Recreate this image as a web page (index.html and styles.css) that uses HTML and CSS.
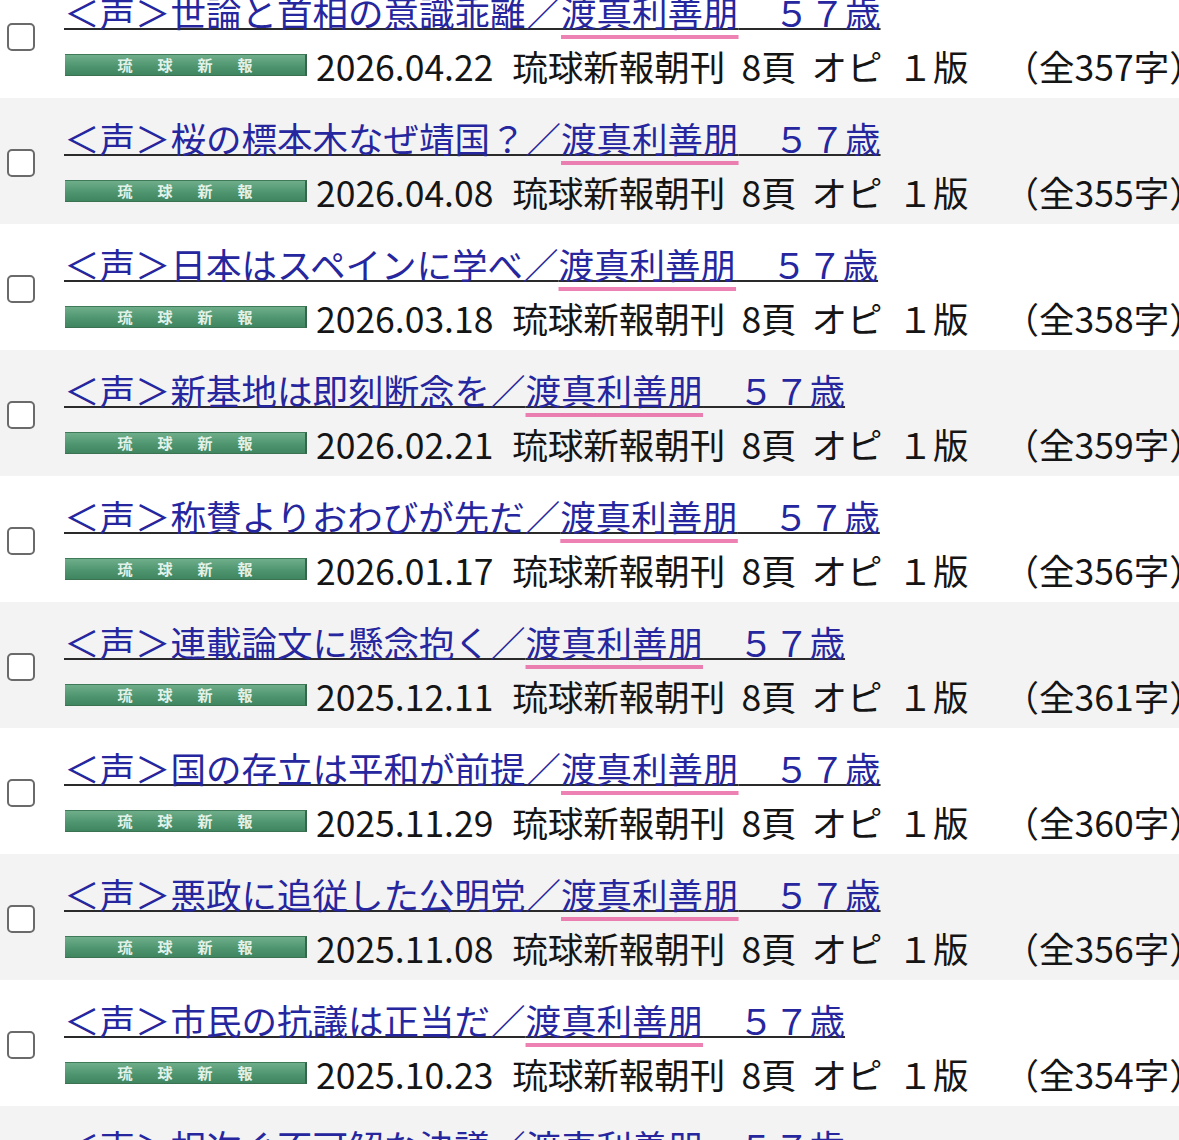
FILE: index.html
```html
<!DOCTYPE html>
<html lang="ja">
<head>
<meta charset="utf-8">
<title>記事一覧</title>
<link rel="stylesheet" href="styles.css">
</head>
<body>
<ul class="list">
  <li class="row">
    <span class="check"></span>
    <div class="body">
      <a class="title" href="#">＜声＞世論と首相の意識乖離／<span class="mark">渡真利善朋</span>　５７歳</a>
      <div class="meta"><span class="band">琉球新報</span><span class="date">2026.04.22</span><span class="paper">琉球新報朝刊</span><span class="page">8頁</span><span class="sec">オピ</span><span class="ed">１版</span><span class="count">（全357字）</span></div>
    </div>
  </li>
  <li class="row">
    <span class="check"></span>
    <div class="body">
      <a class="title" href="#">＜声＞桜の標本木なぜ靖国？／<span class="mark">渡真利善朋</span>　５７歳</a>
      <div class="meta"><span class="band">琉球新報</span><span class="date">2026.04.08</span><span class="paper">琉球新報朝刊</span><span class="page">8頁</span><span class="sec">オピ</span><span class="ed">１版</span><span class="count">（全355字）</span></div>
    </div>
  </li>
  <li class="row">
    <span class="check"></span>
    <div class="body">
      <a class="title" href="#">＜声＞日本はスペインに学べ／<span class="mark">渡真利善朋</span>　５７歳</a>
      <div class="meta"><span class="band">琉球新報</span><span class="date">2026.03.18</span><span class="paper">琉球新報朝刊</span><span class="page">8頁</span><span class="sec">オピ</span><span class="ed">１版</span><span class="count">（全358字）</span></div>
    </div>
  </li>
  <li class="row">
    <span class="check"></span>
    <div class="body">
      <a class="title" href="#">＜声＞新基地は即刻断念を／<span class="mark">渡真利善朋</span>　５７歳</a>
      <div class="meta"><span class="band">琉球新報</span><span class="date">2026.02.21</span><span class="paper">琉球新報朝刊</span><span class="page">8頁</span><span class="sec">オピ</span><span class="ed">１版</span><span class="count">（全359字）</span></div>
    </div>
  </li>
  <li class="row">
    <span class="check"></span>
    <div class="body">
      <a class="title" href="#">＜声＞称賛よりおわびが先だ／<span class="mark">渡真利善朋</span>　５７歳</a>
      <div class="meta"><span class="band">琉球新報</span><span class="date">2026.01.17</span><span class="paper">琉球新報朝刊</span><span class="page">8頁</span><span class="sec">オピ</span><span class="ed">１版</span><span class="count">（全356字）</span></div>
    </div>
  </li>
  <li class="row">
    <span class="check"></span>
    <div class="body">
      <a class="title" href="#">＜声＞連載論文に懸念抱く／<span class="mark">渡真利善朋</span>　５７歳</a>
      <div class="meta"><span class="band">琉球新報</span><span class="date">2025.12.11</span><span class="paper">琉球新報朝刊</span><span class="page">8頁</span><span class="sec">オピ</span><span class="ed">１版</span><span class="count">（全361字）</span></div>
    </div>
  </li>
  <li class="row">
    <span class="check"></span>
    <div class="body">
      <a class="title" href="#">＜声＞国の存立は平和が前提／<span class="mark">渡真利善朋</span>　５７歳</a>
      <div class="meta"><span class="band">琉球新報</span><span class="date">2025.11.29</span><span class="paper">琉球新報朝刊</span><span class="page">8頁</span><span class="sec">オピ</span><span class="ed">１版</span><span class="count">（全360字）</span></div>
    </div>
  </li>
  <li class="row">
    <span class="check"></span>
    <div class="body">
      <a class="title" href="#">＜声＞悪政に追従した公明党／<span class="mark">渡真利善朋</span>　５７歳</a>
      <div class="meta"><span class="band">琉球新報</span><span class="date">2025.11.08</span><span class="paper">琉球新報朝刊</span><span class="page">8頁</span><span class="sec">オピ</span><span class="ed">１版</span><span class="count">（全356字）</span></div>
    </div>
  </li>
  <li class="row">
    <span class="check"></span>
    <div class="body">
      <a class="title" href="#">＜声＞市民の抗議は正当だ／<span class="mark">渡真利善朋</span>　５７歳</a>
      <div class="meta"><span class="band">琉球新報</span><span class="date">2025.10.23</span><span class="paper">琉球新報朝刊</span><span class="page">8頁</span><span class="sec">オピ</span><span class="ed">１版</span><span class="count">（全354字）</span></div>
    </div>
  </li>
  <li class="row">
    <span class="check"></span>
    <div class="body">
      <a class="title" href="#">＜声＞相次ぐ不可解な決議／<span class="mark">渡真利善朋</span>　５７歳</a>
      <div class="meta"><span class="band">琉球新報</span><span class="date">2025.10.04</span><span class="paper">琉球新報朝刊</span><span class="page">8頁</span><span class="sec">オピ</span><span class="ed">１版</span><span class="count">（全357字）</span></div>
    </div>
  </li>
</ul>
</body>
</html>
```

FILE: styles.css
```css
html, body {
  margin: 0;
  padding: 0;
  background: #ffffff;
}
body {
  font-family: "Noto Sans CJK JP", "Noto Sans", sans-serif;
  font-size: 35.5px;
  color: #151515;
  overflow: hidden;
  height: 1140px;
}
.list {
  list-style: none;
  margin: -28px 0 0 0;
  padding: 0;
}
.row {
  display: grid;
  grid-template-columns: 64px 1fr;
  align-items: start;
  height: 126px;
  box-sizing: border-box;
  padding-top: 16px;
  background: #ffffff;
  overflow: hidden;
  white-space: nowrap;
}
.row:nth-child(even) {
  background: #f3f3f3;
}
.check {
  display: block;
  width: 28px;
  height: 28px;
  box-sizing: border-box;
  margin: 35px 0 0 7px;
  border: 2px solid #6a6a6a;
  border-radius: 5px;
  background: #ffffff;
}
.body {
  display: flex;
  flex-direction: column;
  min-width: 0;
}
.title {
  display: block;
  line-height: 48px;
  height: 48px;
  color: #26269e;
  text-decoration: underline;
  text-decoration-color: #2a2a2a;
  text-decoration-thickness: 2px;
  text-underline-offset: 1px;
}
.mark {
  text-decoration: underline solid;
  text-decoration-color: rgba(232, 80, 150, 0.72);
  text-decoration-thickness: 4px;
  text-underline-offset: 8px;
}
.meta {
  display: flex;
  align-items: center;
  margin-top: 6px;
  height: 48px;
  line-height: 48px;
}
.band {
  flex: none;
  width: 242px;
  height: 22px;
  margin-left: 1px;
  margin-top: -2px;
  box-sizing: border-box;
  border-top: 1px solid #3f7a58;
  border-bottom: 1px solid #3a7252;
  border-right: 2px solid #35654a;
  background: linear-gradient(#6fae8a, #4f9670 55%, #3f8560);
  color: #e2f2e9;
  font-size: 15px;
  font-weight: bold;
  line-height: 20px;
  letter-spacing: 25px;
  text-indent: 25px;
  text-align: center;
}
.date { margin-left: 9px; }
.paper { margin-left: 19px; }
.page { margin-left: 16px; }
.sec { margin-left: 15px; }
.ed { margin-left: 15px; }
.count { margin-left: 35px; }
```
